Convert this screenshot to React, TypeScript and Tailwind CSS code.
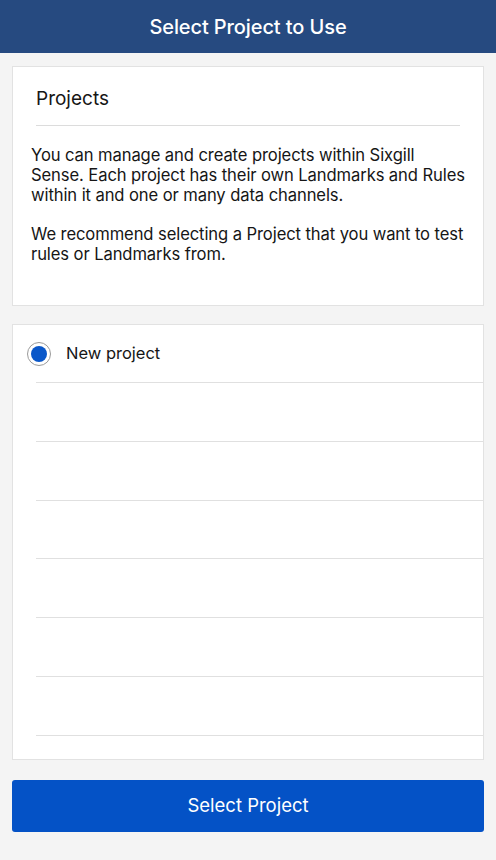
import React from 'react';

const rows = [0, 1, 2, 3, 4, 5];

export default function App() {
    return (
        <div className="w-[496px] h-[860px] bg-[#f4f4f4] flex flex-col font-['Inter','Liberation_Sans',sans-serif] text-[#161616]">
            <header className="h-[53px] bg-[#264a80] flex items-center justify-center shrink-0">
                <h1 className="text-white text-[20px] font-medium tracking-[-0.1px]">Select Project to Use</h1>
            </header>

            <section className="mx-3 mt-[13px] h-[240px] bg-white border border-[#e2e2e2] pt-[18px]">
                <h2 className="mx-[23px] text-[19px] leading-[28px] pb-[12px] border-b border-[#dcdcdc]">Projects</h2>
                <div className="px-[18px] pt-[19px] text-[16.6px] leading-[20px] tracking-[-0.1px]">
                    <p>You can manage and create projects within Sixgill Sense. Each project has their own Landmarks and Rules within it and one or many data channels.</p>
                    <p className="mt-[19px]">We recommend selecting a Project that you want to test rules or Landmarks from.</p>
                </div>
            </section>

            <section className="mx-3 mt-[18px] h-[436px] bg-white border border-[#e2e2e2] overflow-hidden">
                <div className="h-[58px] flex flex-col">
                    <label className="flex-1 flex items-center pl-[14px]">
                        <span className="w-6 h-6 rounded-full border border-[#9a9a9a] flex items-center justify-center shrink-0">
                            <span className="w-4 h-4 rounded-full bg-[#0a57c9]" />
                        </span>
                        <span className="ml-[15px] text-[16.5px]">New project</span>
                    </label>
                    <div className="ml-[23px] border-b border-[#e0e0e0]" />
                </div>
                {rows.map(i => (
                    <div key={i} className="ml-[23px] h-[58.8px] border-b border-[#e0e0e0]" />
                ))}
            </section>

            <button className="mx-3 mt-[20px] h-[52px] rounded-[3px] bg-[#0452c6] text-white text-[18.5px] flex items-center justify-center">
                Select Project
            </button>
        </div>
    );
}
